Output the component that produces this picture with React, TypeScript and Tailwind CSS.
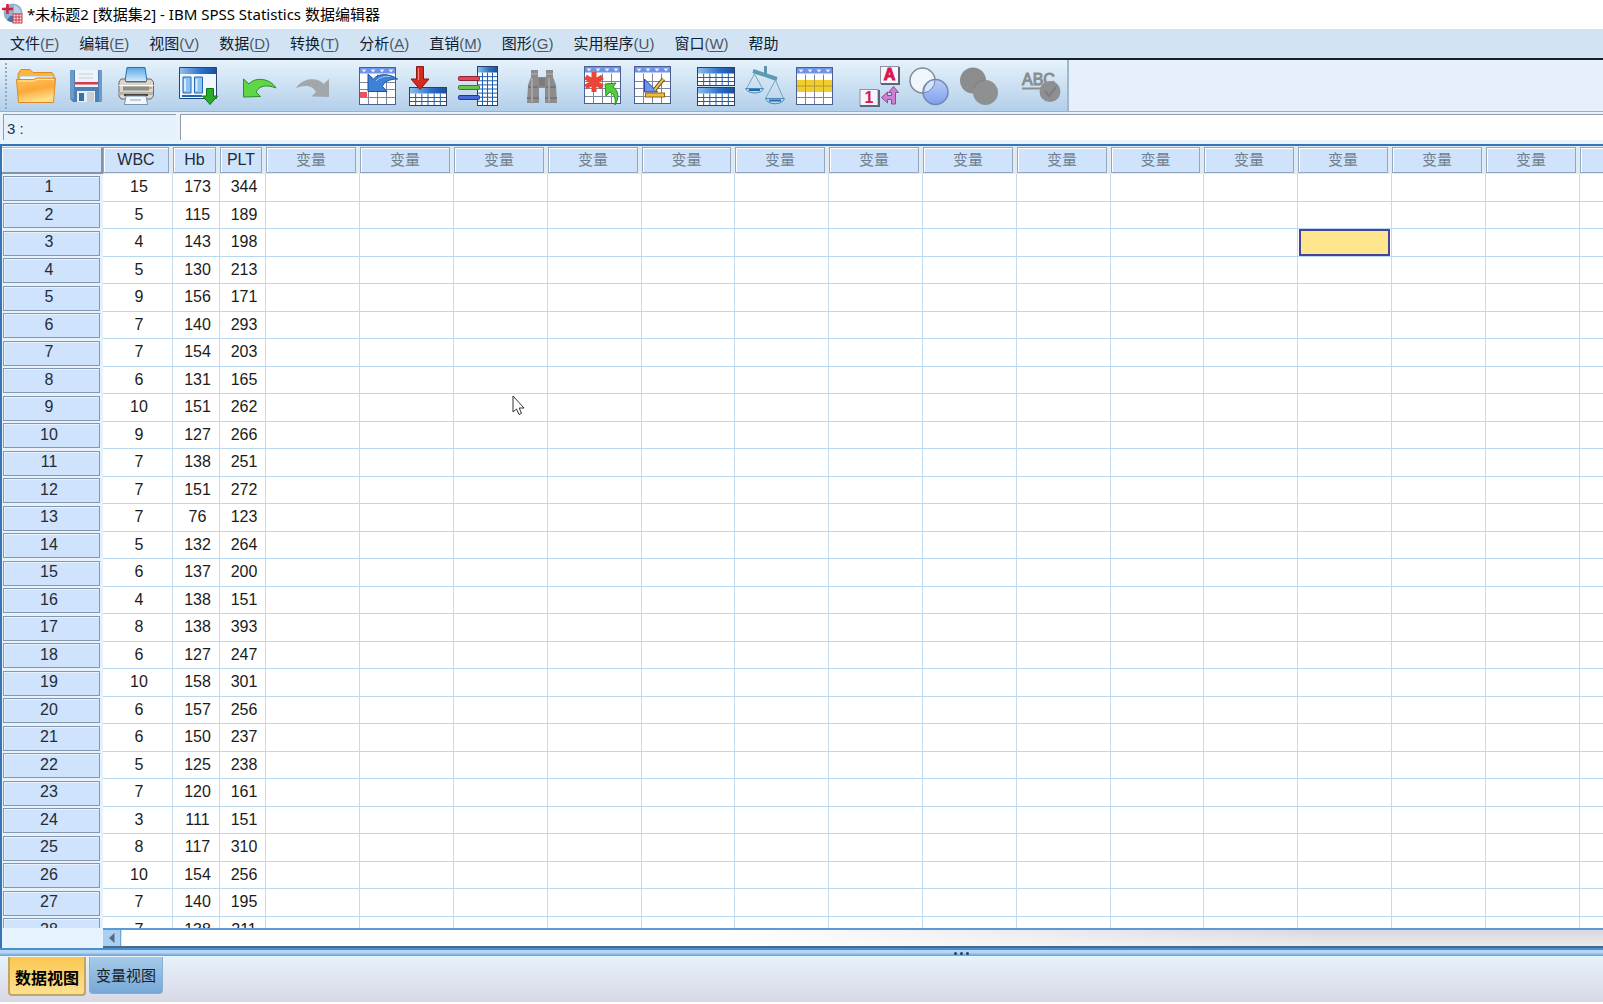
import { useState, type ReactNode } from 'react';

const menus: { label: string; hotkey?: string }[] = [
  { label: '文件', hotkey: 'F' },
  { label: '编辑', hotkey: 'E' },
  { label: '视图', hotkey: 'V' },
  { label: '数据', hotkey: 'D' },
  { label: '转换', hotkey: 'T' },
  { label: '分析', hotkey: 'A' },
  { label: '直销', hotkey: 'M' },
  { label: '图形', hotkey: 'G' },
  { label: '实用程序', hotkey: 'U' },
  { label: '窗口', hotkey: 'W' },
  { label: '帮助' },
];

const rows: [number, number, number][] = [
  [15, 173, 344], [5, 115, 189], [4, 143, 198], [5, 130, 213], [9, 156, 171],
  [7, 140, 293], [7, 154, 203], [6, 131, 165], [10, 151, 262], [9, 127, 266],
  [7, 138, 251], [7, 151, 272], [7, 76, 123], [5, 132, 264], [6, 137, 200],
  [4, 138, 151], [8, 138, 393], [6, 127, 247], [10, 158, 301], [6, 157, 256],
  [6, 150, 237], [5, 125, 238], [7, 120, 161], [3, 111, 151], [8, 117, 310],
  [10, 154, 256], [7, 140, 195], [7, 138, 211],
];

const variables = ['WBC', 'Hb', 'PLT'];
const emptyColumns = Array.from({ length: 14 }, (_, i) => i);

// Sheet made of a header band and a ruled body
function Sheet({ x, y, w, h, head, cols, lines }: {
  x: number; y: number; w: number; h: number; head: number; cols: number; lines: number;
}) {
  const bodyH = h - head;
  return (
    <g>
      <rect x={x} y={y} width={w} height={h} fill="#fff" />
      {Array.from({ length: cols - 1 }, (_, i) => (
        <path key={`c${i}`} d={`M${x + ((i + 1) * w) / cols} ${y + head}v${bodyH}`} stroke="#1d5fae" />
      ))}
      {Array.from({ length: lines - 1 }, (_, i) => (
        <path key={`r${i}`} d={`M${x} ${y + head + ((i + 1) * bodyH) / lines}h${w}`} stroke="#1d5fae" />
      ))}
      <rect x={x} y={y} width={w} height={head} fill="url(#blueBand)" />
      <rect x={x} y={y} width={w} height={h} fill="none" stroke="#2b3f63" />
    </g>
  );
}

// Light calendar-like sheet
function Calendar({ x, y }: { x: number; y: number }) {
  return (
    <g>
      <rect x={x} y={y} width="36" height="37" fill="#fff" />
      <path d={`M${x + 9} ${y + 7}v30M${x + 18} ${y + 7}v30M${x + 27} ${y + 7}v30M${x} ${y + 15}h36M${x} ${y + 22}h36M${x} ${y + 30}h36`} stroke="#7d879c" />
      <rect x={x} y={y} width="36" height="6" fill="#6f93e6" />
      <path d={`M${x + 2} ${y + 2}h5l-2.500 3zM${x + 11} ${y + 2}h5l-2.500 3zM${x + 20} ${y + 2}h5l-2.500 3zM${x + 29} ${y + 2}h5l-2.500 3z`} fill="#e3ecff" />
      <rect x={x} y={y} width="36" height="37" fill="none" stroke="#4b5f92" />
    </g>
  );
}

const icons: Record<string, ReactNode> = {
  open: (
    <>
      <path d="M2 14V8l3-4.500h9l3 3h19l2 3v9H2z" fill="#f7b63c" stroke="#d98b22" />
      <path d="M4 10h33v7H4z" fill="#eef6fd" stroke="#a9c4de" />
      <path d="M.5 13.500h17l3-1.500h19l-2 24.500h-35z" fill="url(#folder)" stroke="#e08a1e" />
      <path d="M2 15h16l3-1.500h17" fill="none" stroke="#ffe9b0" />
    </>
  ),
  save: (
    <>
      <path d="M4 4h32v32H7l-3-3z" fill="#4f80b5" />
      <path d="M4 4h4v29H4zM33 4h3v32h-3z" fill="#6d9bc9" />
      <path d="M9 4h23v17H9z" fill="#eef3f8" />
      <path d="M9 16h23v2.500H9z" fill="#d63a52" />
      <path d="M13 8h14M13 12h14" stroke="#c3ced9" />
      <path d="M11 25h18v11H11z" fill="#e8edf1" />
      <path d="M13 27h5v8h-5z" fill="#3f6d9f" />
      <path d="M21 26h7v10h-7z" fill="#c6d0d8" />
    </>
  ),
  print: (
    <>
      <path d="M11 1.500h18l2 14H9z" fill="url(#paper)" stroke="#2f6fae" />
      <path d="M5 13h4l1 3h20l1-3h4l2.500 3v14l-2.500 3H5l-2-3V16z" fill="#d9d7cf" stroke="#6b6b66" />
      <path d="M3 19.500h34.500" stroke="#fff" />
      <path d="M7 20.500h26v4H7z" fill="#8e8e88" />
      <path d="M3 26h34v3H3z" fill="#b5b3aa" />
      <path d="M33 21h3v2h-3z" fill="#e9a13b" />
      <path d="M8 29h24" stroke="#44443f" strokeWidth="2" />
      <path d="M10 30h20l1.500 8.500h-23z" fill="#f1f8ff" stroke="#7b93ab" />
      <path d="M14 34h11" stroke="#8fa5ba" />
    </>
  ),
  dialog: (
    <>
      <path d="M1.500 1.500h37v31h-37z" fill="#eef6ff" stroke="#27456f" />
      <path d="M2 2h36v6H2z" fill="url(#blueBand)" />
      <path d="M5 11h8v16H5zM16.500 11h8v16h-8z" fill="#8dc3f3" stroke="#2368b5" />
      <path d="M7 13v12M18.500 13v12" stroke="#d5ebff" strokeWidth="2" />
      <path d="M4 30h20" stroke="#2368b5" strokeWidth="2" />
      <path d="M28.500 22.500h7V30h4l-7.500 8.500-7.500-8.500h4z" fill="#27ab2c" stroke="#0f7416" />
    </>
  ),
  undo: (
    <path d="M3.500 13l5.500 5C14 11.500 29 11 36 22c-10-4-17-2-20 4l4.500 4.500-17 .5z" fill="#5fd645" stroke="#2c8c2b" />
  ),
  redo: (
    <path d="M39 13l-5.500 5C28.500 11.500 13 11 6 22c10-4 17-2 20 4l-4.500 4.500 17.500.5z" fill="#a3a6aa" />
  ),
  recall: (
    <>
      <Calendar x={1.5} y={1.5} />
      <path d="M2 26h7v5H2z" fill="#ea5264" />
      <path d="M10 8l5.500 5C20 7 32 7.500 39.500 13c-8 0-14 3-15 7.500l4.500 5H10z" fill="#3c83d6" stroke="#1c4f9c" />
      <path d="M18 15c4-4 8-5 14-4.500" fill="none" stroke="#9fcaf5" />
    </>
  ),
  gotoCase: (
    <>
      <Sheet x={1.5} y={21.5} w={37} h={18} head={6} cols={6} lines={3} />
      <path d="M8.500.500h7V13h5.500l-9 10.500L3 13h5.500z" fill="#d42a20" stroke="#8d1712" />
      <path d="M10.500 2v12" stroke="#f58a7c" />
    </>
  ),
  gotoVariable: (
    <>
      <Sheet x={19.5} y={0.5} w={20} h={39} head={6} cols={4} lines={8} />
      <rect x=".5" y="10.500" width="21" height="4" rx="1" fill="#e5455a" stroke="#8c2436" />
      <rect x=".5" y="19.500" width="21" height="4" rx="1" fill="#6cc14e" stroke="#3c7a2b" />
      <rect x=".5" y="29.500" width="21" height="4" rx="1" fill="#4668d8" stroke="#24388c" />
    </>
  ),
  find: (
    <>
      <path d="M9 4h7v7h8V4h7v7l3 8 1 18H23V22h-6v15H5l1-18 3-8z" fill="#8c8c8c" />
      <path d="M9 8h7M24 8h7" stroke="#b3b3b3" />
      <path d="M6 21h10M24 21h10M5 32h12M23 32h12" stroke="#777" strokeWidth="2" />
      <path d="M10 12v24M27 12v24" stroke="#a5a5a5" strokeWidth="2" />
      <path d="M17 12h6v8h-6z" fill="#7b7b7b" />
    </>
  ),
  insertCase: (
    <>
      <Calendar x={2.5} y={0.5} />
      <path d="M12 6v20M3.500 11l17 10M20.500 11l-17 10" stroke="#ec4436" strokeWidth="5" />
      <path d="M23 18l11-1-3 4c5 3 7 10 2 18 1-7-1-11-5-13l-4 4z" fill="#52cf3b" stroke="#2a8d28" />
    </>
  ),
  insertVariable: (
    <>
      <Calendar x={2.5} y={0.5} />
      <path d="M12.500 13v13h13z" fill="#6c94ea" stroke="#2446a8" />
      <path d="M31.500 13l-9 11" stroke="#5b4520" strokeWidth="4" />
      <path d="M31.500 13l-9 11" stroke="#e9c04c" strokeWidth="2" />
      <rect x="13.500" y="27" width="19" height="4" fill="#f2b93a" stroke="#94671a" />
    </>
  ),
  splitFile: (
    <>
      <Sheet x={1.5} y={1.5} w={37} h={18} head={6} cols={6} lines={3} />
      <Sheet x={1.5} y={21.5} w={37} h={18} head={6} cols={6} lines={3} />
    </>
  ),
  weight: (
    <>
      <path d="M19.500 0v10" stroke="#5e93ab" strokeWidth="3" />
      <path d="M7 5l24 8" stroke="#5e9bb2" strokeWidth="4" />
      <path d="M8.500 8L.5 22.500M8.500 8l8 14.500M29.500 14l-10 18.500M29.500 14l8 18.500" stroke="#7aa3bd" />
      <path d="M-.5 22.500h18c-2 6-15 6-18 0z" fill="#b7def5" stroke="#4a8ab5" />
      <path d="M19.500 32.500h19c-2 7-17 7-19 0z" fill="#b7def5" stroke="#4a8ab5" />
      <path d="M3 24h11M23 34.500h12" stroke="#2a66b0" strokeWidth="2" />
    </>
  ),
  selectCases: (
    <>
      <Calendar x={0.5} y={1.5} />
      <path d="M1 14h35v12H1z" fill="#f1cd2e" />
      <path d="M9.500 14v12M18.500 14v12M27.500 14v12M1 20h35" stroke="#b39a35" />
    </>
  ),
  valueLabels: (
    <>
      <rect x="20.500" y=".5" width="18" height="17" fill="#f5f5fb" stroke="#8d93a5" />
      <path d="M39 1v17H21" fill="none" stroke="#5d6578" strokeWidth="2" />
      <text x="29.500" y="14" textAnchor="middle" fontSize="16" fontWeight="700" fill="#dc1450" stroke="#dc1450" className="font-['Liberation_Sans',sans-serif]">A</text>
      <rect x="0" y="23.500" width="18" height="16" fill="#f5f5fb" stroke="#8d93a5" />
      <path d="M19 24v16H0" fill="none" stroke="#5d6578" strokeWidth="2" />
      <text x="9" y="37" textAnchor="middle" fontSize="16" fontWeight="700" fill="#dc1450" className="font-['Liberation_Sans',sans-serif]">1</text>
      <path d="M33.500 20.500l5 6h-3V38h-4v-4.500h-4v3.500l-6-5.500 6-5.500v3.500h4v-3h-3z" fill="#cf7fcf" stroke="#8f4a9a" />
    </>
  ),
  useSets: (
    <>
      <circle cx="12.500" cy="14.500" r="12.500" fill="#f0f6fb" stroke="#7f8c99" strokeWidth="1.500" />
      <circle cx="25.500" cy="26" r="12.500" fill="url(#ball)" stroke="#7386ad" strokeWidth="1.500" />
      <path d="M13.700 26.900A12.500 12.500 0 0 1 24.900 13.500 12.500 12.500 0 0 1 13.700 26.900z" fill="#d5e3fa" stroke="#7386ad" />
    </>
  ),
  showAll: (
    <>
      <circle cx="13" cy="14.500" r="13" fill="#8b8c8e" />
      <circle cx="25.500" cy="26.500" r="12.500" fill="#8f9092" />
      <path d="M14 22a12.500 12.500 0 0 1 11-8" fill="none" stroke="#7c7d80" />
    </>
  ),
  spelling: (
    <>
      <text x="0" y="19" fontSize="16" fill="#8a8d90" stroke="#8a8d90" className="font-['Liberation_Sans',sans-serif]">ABC</text>
      <path d="M0 22.500h20" stroke="#8a8d90" strokeWidth="2" />
      <circle cx="28" cy="25.500" r="10.500" fill="#8d8f91" />
      <path d="M23 25l4 5 7-9" fill="none" stroke="#7b7d80" strokeWidth="2" />
    </>
  ),
};

const toolGroups: { space: string; tools: { icon: string; title: string; off?: boolean }[] }[] = [
  { space: 'ml-[8px]', tools: [{ icon: 'open', title: '打开' }, { icon: 'save', title: '保存' }, { icon: 'print', title: '打印' }] },
  { space: 'ml-[22px]', tools: [{ icon: 'dialog', title: '重新调用对话框' }] },
  { space: 'ml-[22px]', tools: [{ icon: 'undo', title: '撤消' }, { icon: 'redo', title: '重做', off: true }] },
  { space: 'ml-[28px]', tools: [{ icon: 'recall', title: '转到' }, { icon: 'gotoCase', title: '转到个案' }, { icon: 'gotoVariable', title: '转到变量' }] },
  { space: 'ml-[24px]', tools: [{ icon: 'find', title: '查找', off: true }] },
  { space: 'ml-[20px]', tools: [{ icon: 'insertCase', title: '插入个案' }, { icon: 'insertVariable', title: '插入变量' }] },
  { space: 'ml-[24px]', tools: [{ icon: 'splitFile', title: '拆分文件' }, { icon: 'weight', title: '加权个案' }, { icon: 'selectCases', title: '选择个案' }] },
  { space: 'ml-[24px]', tools: [{ icon: 'valueLabels', title: '值标签' }, { icon: 'useSets', title: '使用变量集' }, { icon: 'showAll', title: '显示所有变量', off: true }] },
  { space: 'ml-[22px]', tools: [{ icon: 'spelling', title: '拼写检查', off: true }] },
];

function Gradients() {
  return (
    <svg className="absolute h-0 w-0" aria-hidden="true">
      <defs>
        <linearGradient id="blueBand">
          <stop offset="0" stopColor="#8fc0ee" />
          <stop offset=".6" stopColor="#2a6fc4" />
          <stop offset="1" stopColor="#1750a0" />
        </linearGradient>
        <linearGradient id="folder" x1="0" y1="0" x2=".3" y2="1">
          <stop offset="0" stopColor="#ffc65a" />
          <stop offset=".55" stopColor="#fba93a" />
          <stop offset="1" stopColor="#ffe08a" />
        </linearGradient>
        <linearGradient id="paper" x1="0" y1="0" x2="0" y2="1">
          <stop offset="0" stopColor="#5aa9e4" />
          <stop offset="1" stopColor="#d3ebfb" />
        </linearGradient>
        <linearGradient id="ball" x1="0" y1="0" x2="0" y2="1">
          <stop offset="0" stopColor="#b9cdf8" />
          <stop offset="1" stopColor="#7ea0ee" />
        </linearGradient>
      </defs>
    </svg>
  );
}

function TitleBar() {
  return (
    <header className="flex h-[29px] shrink-0 items-center gap-1 bg-white pb-0.5 pl-0.5">
      <svg className="size-[21px]" viewBox="0 0 21 21" fill="none">
        <circle cx="11" cy="10" r="9.500" fill="#8fb2d3" />
        <path d="M5 17c4 3 9 3 13 0l-3-4H8z" fill="#3f77ad" />
        <path d="M12 2c4 1 6 4 7 8h-7z" fill="#b9cfe2" />
        <path d="M5.500 1v10M0 6h11" stroke="#d5203c" strokeWidth="2.500" />
        <rect x="11" y="11" width="9" height="9" fill="#f6dfe2" stroke="#c93a4c" />
        <path d="M11 14h9M11 17h9M14 11v9M17 11v9" stroke="#c93a4c" />
      </svg>
      <h1 className="text-[15px] leading-5 whitespace-nowrap text-black font-['Noto_Sans','Noto_Sans_CJK_SC',sans-serif]">
        *未标题2 [数据集2] - IBM SPSS Statistics 数据编辑器
      </h1>
    </header>
  );
}

function MenuBar() {
  return (
    <nav className="flex h-[29px] shrink-0 items-center gap-[20px] bg-[#d2e4f4] pl-[10px]">
      {menus.map((menu) => (
        <button key={menu.label} className="text-[15px] leading-5 whitespace-nowrap text-[#10202f]">
          {menu.label}
          {menu.hotkey && (
            <span className="text-[#4a5866]">
              (<u className="underline-offset-2">{menu.hotkey}</u>)
            </span>
          )}
        </button>
      ))}
    </nav>
  );
}

function Toolbar() {
  return (
    <div className="flex h-[54px] shrink-0 border-t-2 border-b border-t-[#14202b] border-b-[#9db0c1] bg-[#e5f0fc]">
      <div className="flex items-center border-r-2 border-[#a3b7ca] bg-linear-to-b from-[#e6f2fb] to-[#b3cfea] pr-[5px]">
        <div className="ml-[5px] h-[46px] w-[3px] border-l-2 border-dotted border-[#93a9bf]" />
        {toolGroups.map((group) => (
          <div key={group.tools[0].icon} className={`flex gap-[10px] ${group.space}`}>
            {group.tools.map((tool) => (
              <button key={tool.icon} title={tool.title} aria-label={tool.title} disabled={tool.off}>
                <svg className="block size-10 overflow-visible" viewBox="0 0 40 40" fill="none">
                  {icons[tool.icon]}
                </svg>
              </button>
            ))}
          </div>
        ))}
      </div>
    </div>
  );
}

function CellEditor() {
  const [value, setValue] = useState('');
  return (
    <div className="flex h-[32px] shrink-0 gap-1 bg-[#eaf3fc] pt-0.5 pb-1 pl-[3px]">
      <label htmlFor="cell-value" className="flex w-[173px] items-center border-t border-l border-[#8e9ba8] bg-[#e5f1fd] pt-0.5 pl-[3px] text-[15px] leading-5 text-[#26323d]">
        3 :
      </label>
      <input
        id="cell-value"
        value={value}
        onChange={(e) => setValue(e.target.value)}
        className="min-w-0 flex-1 border-t border-l border-[#8e9ba8] bg-white px-1 text-[15px] outline-none"
      />
    </div>
  );
}

function HeaderBox({ children, muted }: { children?: ReactNode; muted?: boolean }) {
  return (
    <div
      className={`mr-1 flex h-[26px] items-center justify-center border border-[#93a8bd] bg-[#cfe3fc] inset-shadow-[1px_1px_#ffffff] ${
        muted ? 'text-[15px] text-[#6f7f8f]' : 'text-[16px] text-[#1f2c38]'
      }`}
    >
      {children}
    </div>
  );
}

function DataGrid() {
  const [selected, setSelected] = useState({ row: 2, col: 11 });

  return (
    <div className="min-h-0 flex-1 overflow-hidden">
      <table className="w-full table-fixed border-separate border-spacing-0 text-center text-[16px] leading-5 text-[#1b1b1b]">
        <colgroup>
          <col className="w-[101px]" />
          <col className="w-[70px]" />
          <col className="w-[47px]" />
          <col className="w-[46px]" />
          {emptyColumns.map((i) => (
            <col key={i} className={i % 5 === 4 ? 'w-[93px]' : 'w-[94px]'} />
          ))}
          {/* takes whatever width is left */}
          <col />
        </colgroup>
        <thead>
          <tr className="h-[28px] bg-[#dfeaf5]">
            <td className="p-0">
              <div className="h-[27px] border-t border-r-2 border-b-2 border-t-[#a9bfd5] border-r-[#8195aa] border-b-[#8195aa] bg-[#cfe3fc] inset-shadow-[1px_1px_#ffffff]" />
            </td>
            {variables.map((name) => (
              <th key={name} scope="col" className="p-0 font-normal">
                <HeaderBox>{name}</HeaderBox>
              </th>
            ))}
            {emptyColumns.map((i) => (
              <th key={i} scope="col" className="p-0 font-normal">
                <HeaderBox muted>变量</HeaderBox>
              </th>
            ))}
            <td className="p-0">
              <div className="h-[26px] border border-r-0 border-[#93a8bd] bg-[#cfe3fc] inset-shadow-[1px_1px_#ffffff]" />
            </td>
          </tr>
        </thead>
        <tbody>
          {rows.map((values, r) => (
            <tr key={r} className={r % 2 === 0 ? 'h-[28px]' : 'h-[27px]'}>
              <th scope="row" className="bg-[#e8f2fc] p-0 font-normal">
                <div className="mr-[3px] ml-px flex h-[25px] items-center justify-center border border-[#8398b0] bg-[#cfe3fc] pr-[5px] pb-0.5 text-[#1f2c38] inset-shadow-[1px_1px_#e9f3ff]">
                  {r + 1}
                </div>
              </th>
              {values.map((value, c) => (
                <td key={c} className="border-r border-b border-r-[#c3dbef] border-b-[#b9d7ee] p-0 pb-px pl-[3px]">
                  {value}
                </td>
              ))}
              {emptyColumns.map((c) => (
                <td
                  key={c}
                  onClick={() => setSelected({ row: r, col: c })}
                  className="border-r border-b border-r-[#c3dbef] border-b-[#b9d7ee] p-0"
                >
                  {selected.row === r && selected.col === c && (
                    <div className="mr-px ml-px h-[27px] border-2 border-[#44449c] bg-[#ffe68e]" />
                  )}
                </td>
              ))}
              <td className="border-b border-b-[#b9d7ee] p-0" />
            </tr>
          ))}
        </tbody>
      </table>
    </div>
  );
}

function ScrollBar() {
  return (
    <div className="flex h-[20px] shrink-0">
      <div className="w-[101px] bg-[#e6f2fd]" />
      <div className="flex flex-1 border-t-2 border-b-2 border-t-[#5a9bd3] border-b-[#47698c] bg-linear-to-b from-[#d9d8e2] to-[#ebebeb]">
        <button aria-label="向左滚动" className="flex w-[18px] items-center justify-center border-r border-[#6fa5d6] bg-[#a9cff2]">
          <svg className="h-[12px] w-[8px]" viewBox="0 0 8 12" fill="#566b80">
            <path d="M6.500 1v10L1 6z" />
          </svg>
        </button>
        <div className="ml-px w-4/5 bg-linear-to-r from-white from-50% to-transparent" />
      </div>
    </div>
  );
}

const tabs = [
  { id: 'data', label: '数据视图' },
  { id: 'variable', label: '变量视图' },
];

function ViewTabs() {
  const [active, setActive] = useState('data');
  return (
    <div role="tablist" className="flex h-[45px] shrink-0 items-start gap-[3px] bg-linear-to-b from-[#e6f2fb] to-[#d9d8e6] pl-2">
      {tabs.map((tab) => (
        <button
          key={tab.id}
          role="tab"
          aria-selected={active === tab.id}
          onClick={() => setActive(tab.id)}
          className={`flex items-center justify-center rounded-b border-t-0 ${
            active === tab.id
              ? 'h-[39px] w-[78px] border-2 border-[#c2a565] bg-linear-to-b from-[#fac750] to-[#fde08f] pt-[6px] text-[16px] font-bold text-black'
              : 'h-[37px] w-[74px] border border-[#86afd3] bg-linear-to-b from-[#a7cbe8] to-[#76a8d6] pt-[3px] text-[15px] text-[#13202c]'
          }`}
        >
          {tab.label}
        </button>
      ))}
    </div>
  );
}

export default function App() {
  return (
    <div className="relative flex h-screen flex-col overflow-hidden bg-white pb-0.5 font-['Liberation_Sans','Noto_Sans_CJK_SC',sans-serif]">
      <Gradients />
      <TitleBar />
      <MenuBar />
      <Toolbar />
      <CellEditor />
      <main className="flex min-h-0 flex-1 flex-col border-t-2 border-l-2 border-[#3675b5]">
        <DataGrid />
        <ScrollBar />
      </main>
      <div className="flex h-[9px] shrink-0 items-center justify-center gap-[3px] border-t-2 border-b border-t-[#4a90c8] border-b-[#e8f8ff] bg-linear-to-b from-[#b3d6fb] from-40% to-[#7199c9] pl-[320px]">
        <span className="size-[3px] rounded-full bg-[#1f3f78]" />
        <span className="size-[3px] rounded-full bg-[#1f3f78]" />
        <span className="size-[3px] rounded-full bg-[#1f3f78]" />
      </div>
      <ViewTabs />
      {/* Mouse pointer */}
      <svg className="pointer-events-none absolute top-[395px] left-[512px] h-[21px] w-[13px]" viewBox="0 0 13 21" fill="#fff" stroke="#333">
        <path d="M1 1v16l3.500-3 2.500 5.500 2.500-1.200L7.200 13H12z" />
      </svg>
    </div>
  );
}
